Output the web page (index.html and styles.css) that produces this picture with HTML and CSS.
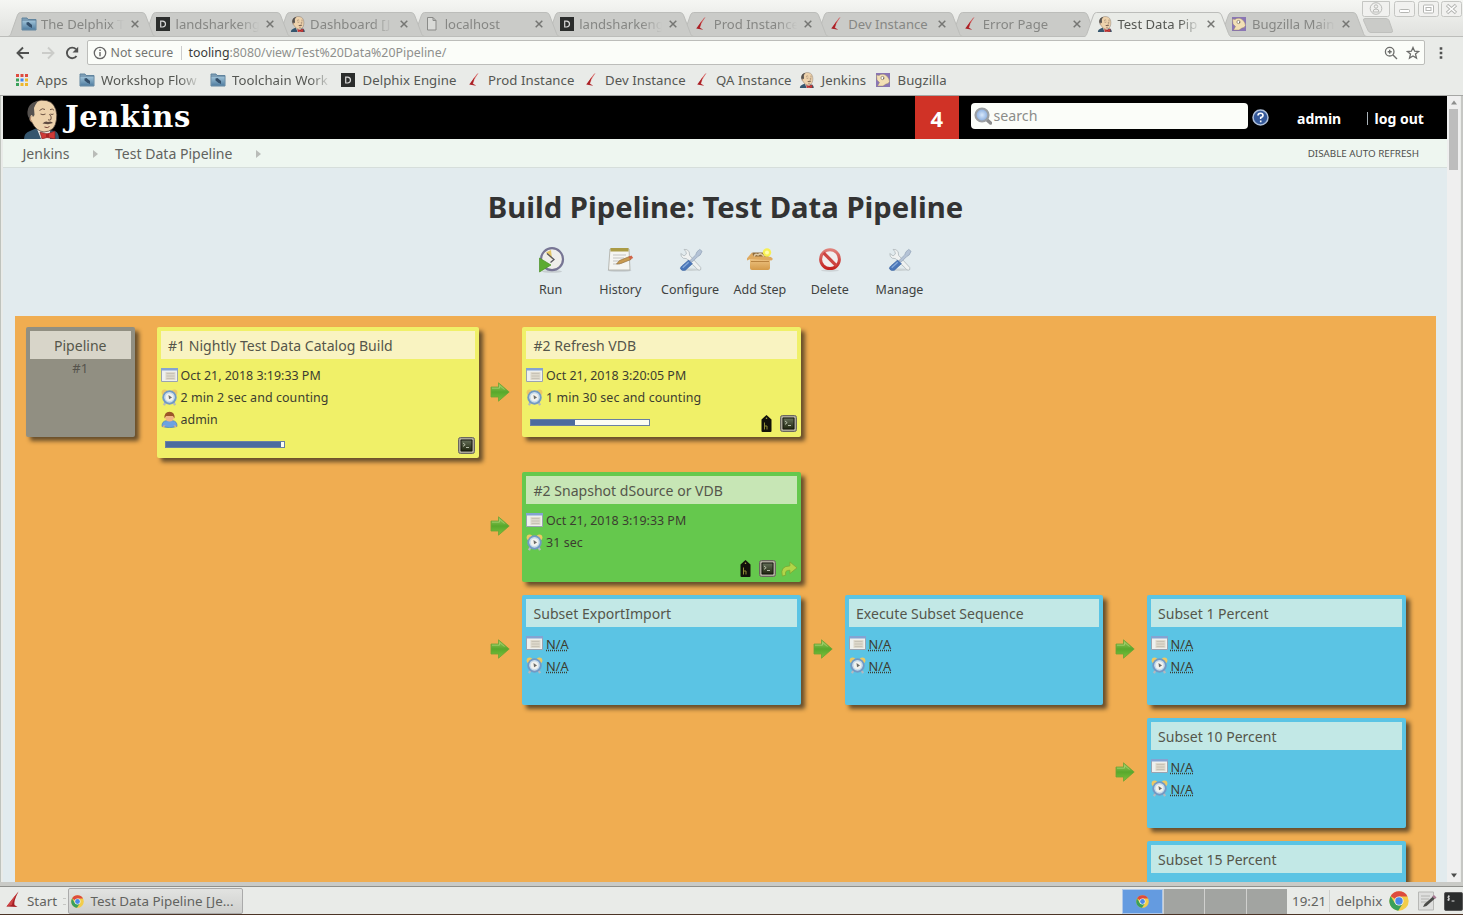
FILE: index.html
```html
<!DOCTYPE html>
<html lang="en">
<head>
<meta charset="utf-8">
<title>Test Data Pipeline [Jenkins]</title>
<link rel="stylesheet" href="styles.css">
</head>
<body>
<svg class="sprite" aria-hidden="true">
  <defs>
    <linearGradient id="g-folder" x1="0" y1="0" x2="0" y2="1"><stop offset="0" stop-color="#9cc0d6"/><stop offset="1" stop-color="#527fa2"/></linearGradient>
    <linearGradient id="g-arrow" x1="0" y1="0" x2="0" y2="1"><stop offset="0" stop-color="#9cc860"/><stop offset=".5" stop-color="#58a82c"/><stop offset="1" stop-color="#7cc23c"/></linearGradient>
    <linearGradient id="g-box" x1="0" y1="0" x2="0" y2="1"><stop offset="0" stop-color="#f0c787"/><stop offset="1" stop-color="#d49a49"/></linearGradient>
    <linearGradient id="g-red" x1="0" y1="0" x2="0" y2="1"><stop offset="0" stop-color="#df7f79"/><stop offset="1" stop-color="#c42220"/></linearGradient>
    <radialGradient id="g-lens"><stop offset="0" stop-color="#d8e8fb"/><stop offset="1" stop-color="#84a9dc"/></radialGradient>
    <linearGradient id="g-term" x1="0" y1="0" x2="0" y2="1"><stop offset="0" stop-color="#66705a"/><stop offset="1" stop-color="#20270f"/></linearGradient>
  </defs>
  <symbol id="tab-dim" viewBox="0 0 148 25"><path d="M0 24.5 C2 24 2.500 23 3 21.500 L9.500 3 Q10.500.5 12.500.5 H134 Q136.500.5 137.500 3 L144.500 21.500 C145 23 146 24.500 148 24.500 Z" fill="#cacbc8" stroke="#bcbdba"/></symbol>
  <symbol id="tab-lit" viewBox="0 0 148 25"><path d="M0 25 C2 24 2.500 23 3 21.500 L9.500 3 Q10.500.5 12.500.5 H134 Q136.500.5 137.500 3 L144.500 21.500 C145 23 146 24.500 148 25" fill="#e9ebe7" stroke="#bcbdba"/></symbol>
  <symbol id="folder" viewBox="0 0 16 16"><path d="M1 3.500V2h5l1 1.500h8V14H1z" fill="#7c9db5" stroke="#60849e"/><path d="M1.500 5h13v8.500h-13z" fill="url(#g-folder)"/><path d="M5.500 6.500l2-.5 3.500 3v3l-3-1.500-2.500-2z" fill="#334f6b"/></symbol>
  <symbol id="dbox" viewBox="0 0 16 16"><path d="M1 1h14v14H1z" fill="#2b2d2c"/><path d="M5.700 5.200h1.800q3 .2 3 2.900t-3 2.900H5.700z" fill="none" stroke="#d8d8d8" stroke-width="1.200"/></symbol>
  <symbol id="fin" viewBox="0 0 16 20"><path d="M13.500.5Q8.500 10 9.500 14l3 2-11-.5z" fill="#a51e24"/><path d="M13.500.5Q8 7 1.500 15.500L7 14q.5-5 6.500-13.500z" fill="#cf4545"/></symbol>
  <symbol id="fin-thin" viewBox="0 0 16 16"><path d="M11.800 1.500Q8 5.500 5.500 10.500L6.500 13Q7 8 11.800 1.500z" fill="#d03c3c" stroke="#d03c3c" stroke-width=".4"/><path d="M8.500 5.500L3.200 12.500l7 1.200-2.700-1.600-1 .2z" fill="#aa2026"/></symbol>
  <symbol id="butler" viewBox="0 0 36 40"><path d="M0 40q0-6 6-8l7-3 12 2 6 1q4 2 4 8z" fill="#35566e"/><path d="M13 30l13 2v8H17z" fill="#f1eee8"/><path d="M4 13Q6 3 17 1.200q12-.5 14.800 9.300 1.500 5 .7 10-.8 6-3.500 9-4 3.500-9 3.500-8-1-12-9.500-3-2-2.500-5z" fill="#edd2ac" stroke="#4a3c35" stroke-width=".7"/><path d="M3.500 15Q3 4 14 2q-3 4-4 7l.5 7-1.500 2-1-2q-2 0-1.500 4-2.500-1-3-5z" fill="#56524f"/><path d="M7 17q-2 3 1 6" fill="none" stroke="#b58b6c"/><path d="M15.500 11.500q3-3 5.500-1m5 .2q2.500-1.500 4 .5M16.500 15q2.500 1.500 5 0m5 0q1.500 1 3 0m-4 0q2.500 3 1.500 5.500-1 1-3 .3" fill="none" stroke="#5b4338" stroke-width=".9"/><path d="M18.500 24.500q3-3 5.500-1.500 3-1.500 5 1l-5 1.200z" fill="#5f4a40"/><path d="M20.500 28q3 1.500 5-.5" fill="none" stroke="#7a4439"/><path d="M16 33l7 2 8-3v8l-8-1.500-5 1.500z" fill="#cf3a37" stroke="#7a1c1c" stroke-width=".6"/><path d="M22 34.500h3v4h-3z" fill="#a82625"/></symbol>
  <symbol id="bugz" viewBox="0 0 16 16"><path d="M1 1h14v14H1z" fill="#8a76b4"/><path d="M1.500 3q3 1 4-.5 3-.8 5 .5 4 3 4 6.500-1 2.500-3.500 2.500L8 14H2.500l2-3.500L2 8z" fill="#f2dfb5" stroke="#8c7b63" stroke-width=".4"/><circle cx="7.500" cy="6" r="1.600" fill="#fff" stroke="#695e52" stroke-width=".6"/><path d="M8 6.200h.8" stroke="#333"/></symbol>
  <symbol id="page" viewBox="0 0 16 16"><path d="M3.500 1.500h5.500l3 3v9.500H3.500zM9 1.500v3h3" fill="#d9dad7" stroke="#8a8b88"/></symbol>
  <symbol id="x" viewBox="0 0 10 10"><path d="M1.700 1.700l6.600 6.600m0-6.600L1.700 8.300" stroke="#757673" stroke-width="1.500"/></symbol>
  <symbol id="cal" viewBox="0 0 17 17"><path d="M.5 1.500h16v13H.5z" fill="#eef0ee" stroke="#9aa3b0"/><path d="M0 1h17v2.500H0z" fill="#84a3d2"/><path d="M4.500 5h10v8h-10z" fill="#ded9cc"/><path d="M5.500 6.500h8M5.500 9h8M5.500 11.500h8" stroke="#c2bcb0" stroke-width=".8"/></symbol>
  <symbol id="clock" viewBox="0 0 17 17"><path d="M4.500 13L3 16.300m9.500-3.300l1.500 3.300" stroke="#b4b9bf" stroke-width="2.200"/><circle cx="3.600" cy="3.600" r="3" fill="#edc963"/><circle cx="13.400" cy="3.600" r="3" fill="#edc963"/><circle cx="8.500" cy="8.500" r="7.200" fill="#7299c4"/><circle cx="8.500" cy="8.300" r="4.600" fill="#f2f2ee" stroke="#c8dceb" stroke-width="1.500"/><path d="M7.500 6l3.500 2.500-3 1.700z" fill="#6b6b68"/></symbol>
  <symbol id="user" viewBox="0 0 17 17"><path d="M1 15.500q-.5-5.500 5-6h5q5.500.5 5 6-7.500 2.500-15 0z" fill="#6ba2e2" stroke="#477aac" stroke-width=".6"/><path d="M1 15l2 1.300 1.500-2zM16 15l-2 1.300-1.500-2z" fill="#f0b080"/><circle cx="8.500" cy="6" r="4.500" fill="#f0b584"/><path d="M3.500 7.500Q3 1 8.500.8 14 1 13.500 7.500L12 5H5z" fill="#9c5529"/></symbol>
  <symbol id="term" viewBox="0 0 17 17"><rect x=".5" y=".5" width="16" height="16" rx="2" fill="#aaa698" stroke="#6a675e"/><path d="M3 3h11v11H3z" fill="url(#g-term)" stroke="#17190f"/><path d="M5 6l2.200 1.700L5 9.400M8 10.500h3" fill="none" stroke="#c4c9b6" stroke-width=".9"/></symbol>
  <symbol id="tag" viewBox="0 0 11 17"><path d="M5.500 0L10.500 4.500V16q0 1-1 1h-8q-1 0-1-1V4.500z" fill="#12110a"/><circle cx="5.500" cy="3.200" r=".8" fill="#aaa842"/><path d="M3.500 7.500v7M3.500 11H6v3.500" fill="none" stroke="#8f8c35"/></symbol>
  <symbol id="redo" viewBox="0 0 17 17"><path d="M1.500 16Q-1.500 5.500 9.500 5.200V1L17 7.300l-7.500 6V9.800Q3.500 9.500 5 15z" fill="#b2d548" stroke="#7da532" stroke-width=".8"/></symbol>
  <symbol id="arrow" viewBox="0 0 20 20"><path d="M1 5h7.500V.8L19.200 10 8.500 19.200V15H1z" fill="url(#g-arrow)" stroke="#6da335" stroke-width=".8"/><path d="M2 6.200h7.500V3.500l5 4" fill="none" stroke="#a5cf70" stroke-width=".8"/></symbol>
  <symbol id="tools" viewBox="0 0 26 26"><ellipse cx="13" cy="23.500" rx="11" ry="1.300" fill="#cbd2d4"/><path d="M5.500 1.500Q9 1 11 4l.5 4L23.500 21q1 3-1.500 3-2 0-3-2L8 11.500q-4 .5-5.500-2.500l-.5-3 3.500 2.500L8 6.500 7.500 4z" fill="#f0f2f1" stroke="#a9b2b6" stroke-width=".8"/><path d="M22.500 1.500l2.500 2-2 4-3 2-6 6-2-2 6-6 1.500-3.500z" fill="#b4c3d6" stroke="#8c9db3" stroke-width=".7"/><path d="M10.500 13l4 4-7.500 7q-3.500 1.500-5.500-1.500 0-2 1.500-3z" fill="#4a76b8" stroke="#3a639f" stroke-width=".6"/><path d="M10.500 15.500l-6.500 6" stroke="#86aada" stroke-width="1.500"/></symbol>
  <symbol id="run" viewBox="0 0 28 28"><ellipse cx="15" cy="25.500" rx="10" ry="1.300" fill="#c6cdd0"/><circle cx="15" cy="13.200" r="11" fill="#eeeeea" stroke="#777594" stroke-width="2.200"/><path d="M15 13L9 6.500l5-2.500z" fill="#e4c766"/><path d="M10 7.500l7 6-3.500 3" fill="none" stroke="#57565c" stroke-width="1.300"/><path d="M2.500 12l11.500 7-11.500 7z" fill="#5cab30" stroke="#4b9126" stroke-width=".7"/></symbol>
  <symbol id="history" viewBox="0 0 28 28"><ellipse cx="13.500" cy="24.500" rx="12" ry="1.300" fill="#c6cdd0"/><path d="M4 3h19l1 21H2.500z" fill="#f5f5f2" stroke="#aaa9a2" stroke-width=".8"/><path d="M4.500 2h18v3.500h-18z" fill="#aa9b45"/><path d="M7 9h13M7 12h11M7 15h6M7 18h7" stroke="#c3c3c1"/><path d="M10.500 18l3-3.500 10-4 1.500 3-10 4z" fill="#c99a50" stroke="#8b6730" stroke-width=".6"/><path d="M22.500 10.800l3-1.300 1.700 2.500-3 1.500z" fill="#cf6448"/></symbol>
  <symbol id="add" viewBox="0 0 28 28"><path d="M4 12h20v10q0 2-2 2H6q-2 0-2-2z" fill="url(#g-box)"/><path d="M6.500 6.500h14.500l2 6H5z" fill="#8e6b3b"/><path d="M8 11q1-4 4-2 3-3 6 2" fill="none" stroke="#dfcaa6" stroke-width="1.500"/><path d="M4.500 13L1 14.500v-2.300L6 6.500l1.500 4h13.500l4 .5 2 2-1.500 1.500z" fill="#dfaa60"/><path d="M5 15.500h18" stroke="#b98440"/><circle cx="21" cy="6.500" r="4.200" fill="#f7f053"/><circle cx="21" cy="6.500" r="2" fill="#fffcae"/></symbol>
  <symbol id="delete" viewBox="0 0 28 28"><ellipse cx="14" cy="24.500" rx="9" ry="1.200" fill="#cdd3d6"/><circle cx="14" cy="13.200" r="9.400" fill="#f1eeee" stroke="url(#g-red)" stroke-width="3"/><path d="M7.500 6.800l13 13" stroke="#cd4441" stroke-width="3.200"/></symbol>
  <symbol id="chrome" viewBox="0 0 20 20"><circle cx="10" cy="10" r="9.700" fill="#f2cd4a"/><path d="M10 10L1.600 5.200A9.700 9.700 0 0 1 18.500 5.400H10z" fill="#dd4b3e"/><path d="M1.600 5.200A9.700 9.700 0 0 0 9.200 19.700L14 12.300 10 14.500 6 12.300z" fill="#3aa05b"/><circle cx="10" cy="10" r="4.600" fill="#f4f4f0"/><circle cx="10" cy="10" r="3.700" fill="#4a88e8"/></symbol>
</svg>

<div class="screen">
  <header class="tabstrip">
    <div class="tabs">
      <div class="tab z10"><svg class="shape"><use href="#tab-dim"/></svg><svg class="fav"><use href="#folder"/></svg><span class="name early">The Delphix T</span><svg class="close"><use href="#x"/></svg></div>
      <div class="tab z9"><svg class="shape"><use href="#tab-dim"/></svg><svg class="fav"><use href="#dbox"/></svg><span class="name">landsharkeng</span><svg class="close"><use href="#x"/></svg></div>
      <div class="tab z8"><svg class="shape"><use href="#tab-dim"/></svg><svg class="fav"><use href="#butler"/></svg><span class="name">Dashboard [J</span><svg class="close"><use href="#x"/></svg></div>
      <div class="tab z7"><svg class="shape"><use href="#tab-dim"/></svg><svg class="fav"><use href="#page"/></svg><span class="name">localhost</span><svg class="close"><use href="#x"/></svg></div>
      <div class="tab z6"><svg class="shape"><use href="#tab-dim"/></svg><svg class="fav"><use href="#dbox"/></svg><span class="name">landsharkeng</span><svg class="close"><use href="#x"/></svg></div>
      <div class="tab z5"><svg class="shape"><use href="#tab-dim"/></svg><svg class="fav"><use href="#fin-thin"/></svg><span class="name">Prod Instance</span><svg class="close"><use href="#x"/></svg></div>
      <div class="tab z4"><svg class="shape"><use href="#tab-dim"/></svg><svg class="fav"><use href="#fin-thin"/></svg><span class="name full">Dev Instance</span><svg class="close"><use href="#x"/></svg></div>
      <div class="tab z3"><svg class="shape"><use href="#tab-dim"/></svg><svg class="fav"><use href="#fin-thin"/></svg><span class="name">Error Page</span><svg class="close"><use href="#x"/></svg></div>
      <div class="tab active"><svg class="shape"><use href="#tab-lit"/></svg><svg class="fav"><use href="#butler"/></svg><span class="name">Test Data Pip</span><svg class="close"><use href="#x"/></svg></div>
      <div class="tab z1"><svg class="shape"><use href="#tab-dim"/></svg><svg class="fav"><use href="#bugz"/></svg><span class="name">Bugzilla Main</span><svg class="close"><use href="#x"/></svg></div>
      <svg class="newtab" viewBox="0 0 32 16"><path d="M3 .5h21q2 0 3 2l3.500 10q.5 2-1.500 2H9q-2 0-3-2L1.500 2.500Q1 .5 3 .5z" fill="#cacbc8" stroke="#bfc0bd"/></svg>
    </div>
    <div class="winbtns">
      <svg class="wb wide" viewBox="0 0 28 16"><path d="M.5 .5v13q0 2 2 2h23q2 0 2-2V.5z" fill="#f1f1ef" stroke="#c5c6c3"/><circle cx="14" cy="7.500" r="5.800" fill="none" stroke="#babbb8"/><circle cx="14" cy="5.500" r="1.700" fill="none" stroke="#babbb8"/><path d="M11 11q0-3 3-3t3 3z" fill="none" stroke="#babbb8"/></svg>
      <svg class="wb" viewBox="0 0 21 16"><rect x=".5" y=".5" width="20" height="15" rx="2" fill="#f1f1ef" stroke="#c5c6c3"/><rect x="5.500" y="8.500" width="10" height="3" rx="1" fill="#fff" stroke="#b5b6b3"/></svg>
      <svg class="wb" viewBox="0 0 21 16"><rect x=".5" y=".5" width="20" height="15" rx="2" fill="#f1f1ef" stroke="#c5c6c3"/><rect x="5.500" y="4" width="10" height="8" rx="1" fill="#fff" stroke="#b5b6b3"/><rect x="8" y="6.500" width="5" height="3" fill="none" stroke="#b5b6b3"/></svg>
      <svg class="wb" viewBox="0 0 21 16"><rect x=".5" y=".5" width="20" height="15" rx="2" fill="#f1f1ef" stroke="#c5c6c3"/><path d="M6 4l9 8m0-8l-9 8" stroke="#b5b6b3" stroke-width="3.400"/><path d="M6.500 4.500l8 7m0-7l-8 7" stroke="#fff" stroke-width="1.500"/></svg>
    </div>
  </header>

  <div class="toolbar">
    <svg class="nav" viewBox="0 0 14 14"><path d="M13 7H2M7 1.500L1.500 7 7 12.500" fill="none" stroke="#505150" stroke-width="1.900"/></svg>
    <svg class="nav" viewBox="0 0 14 14"><path d="M1 7h11M7 1.500L12.500 7 7 12.500" fill="none" stroke="#cbccc9" stroke-width="1.900"/></svg>
    <svg class="nav" viewBox="0 0 14 14"><path d="M11.500 10A5.300 5.300 0 1 1 11 3.200" fill="none" stroke="#505150" stroke-width="1.900"/><path d="M13.200.8v5.700H7.500z" fill="#505150"/></svg>
    <div class="omnibox">
      <svg class="info" viewBox="0 0 14 14"><circle cx="7" cy="7" r="5.700" fill="none" stroke="#666" stroke-width="1.300"/><path d="M7 6v4.200M7 3.500V5" stroke="#666" stroke-width="1.400"/></svg>
      <span class="secure">Not secure</span><i class="bar"></i>
      <span class="url"><b>tooling</b>:8080/view/Test%20Data%20Pipeline/</span>
      <svg class="oi" viewBox="0 0 14 14"><circle cx="5.700" cy="5.700" r="4.300" fill="none" stroke="#6c6d6b" stroke-width="1.300"/><path d="M9 9l4 4M3.700 5.700h4M5.700 3.700v4" stroke="#6c6d6b" stroke-width="1.400"/></svg>
      <svg class="oi" viewBox="0 0 14 14"><path d="M7 1.500l1.600 3.700 4 .3-3.100 2.600 1 4L7 10l-3.500 2.100 1-4L1.400 5.500l4-.3z" fill="none" stroke="#6c6d6b" stroke-width="1.300"/></svg>
    </div>
    <svg class="dots" viewBox="0 0 4 14"><path d="M.7 1.200h2.600v2.600H.7zM.7 5.700h2.600v2.600H.7zM.7 10.200h2.600v2.600H.7z" fill="#505150"/></svg>
  </div>

  <nav class="bookmarks">
    <div class="bm b-apps"><svg viewBox="0 0 16 16"><path d="M2 2h3v3H2zM6.500 2h3v3h-3zM11 2h3v3h-3z" fill="#df4b3f"/><path d="M2 6.500h3v3H2z" fill="#3aa15b"/><path d="M6.500 6.500h3v3h-3z" fill="#4385ee"/><path d="M11 6.500h3v3h-3zM6.500 11h3v3h-3zM11 11h3v3h-3z" fill="#eeb72c"/><path d="M2 11h3v3H2z" fill="#3aa15b"/></svg><span>Apps</span></div>
    <div class="bm b-work"><svg><use href="#folder"/></svg><span class="fade">Workshop Flow</span></div>
    <div class="bm b-tool"><svg><use href="#folder"/></svg><span class="fade">Toolchain Work</span></div>
    <div class="bm b-eng"><svg><use href="#dbox"/></svg><span>Delphix Engine</span></div>
    <div class="bm b-prod"><svg><use href="#fin-thin"/></svg><span>Prod Instance</span></div>
    <div class="bm b-dev"><svg><use href="#fin-thin"/></svg><span>Dev Instance</span></div>
    <div class="bm b-qa"><svg><use href="#fin-thin"/></svg><span>QA Instance</span></div>
    <div class="bm b-jen"><svg><use href="#butler"/></svg><span>Jenkins</span></div>
    <div class="bm b-bug"><svg><use href="#bugz"/></svg><span>Bugzilla</span></div>
  </nav>

  <div class="viewport">
    <main class="page">
      <div class="masthead">
        <svg class="logo"><use href="#butler"/></svg>
        <span class="brand">Jenkins</span>
        <span class="alert">4</span>
        <div class="search"><svg viewBox="0 0 18 18"><path d="M12 12l4.500 4" stroke="#8c8d8d" stroke-width="3.500" stroke-linecap="round"/><circle cx="8" cy="8" r="6.500" fill="url(#g-lens)" stroke="#9b9fa3" stroke-width="2.200"/></svg><span>search</span></div>
        <svg class="help" viewBox="0 0 17 17"><circle cx="8.500" cy="8.500" r="7.500" fill="#35599a" stroke="#aebfd9" stroke-width="1.500"/><path d="M6 6.500q0-2.300 2.500-2.300T11 6.300Q11 8 8.700 8.500V10M8.700 11.500v1.700" fill="none" stroke="#fff" stroke-width="1.600"/></svg>
        <span class="who">admin</span><i class="pipe"></i><span class="out">log out</span>
      </div>
      <div class="crumbs">
        <span class="c1">Jenkins</span><svg class="tri" viewBox="0 0 5 8"><path d="M0 0l5 4-5 4z" fill="#b9bcb8"/></svg><span class="c2">Test Data Pipeline</span><svg class="tri" viewBox="0 0 5 8"><path d="M0 0l5 4-5 4z" fill="#b9bcb8"/></svg>
        <span class="refresh">DISABLE AUTO REFRESH</span>
      </div>
      <h1><span>Build Pipeline: Test Data Pipeline</span></h1>
      <div class="actions">
        <div><svg><use href="#run"/></svg><span>Run</span></div>
        <div><svg><use href="#history"/></svg><span>History</span></div>
        <div><svg class="tl"><use href="#tools"/></svg><span>Configure</span></div>
        <div><svg><use href="#add"/></svg><span>Add Step</span></div>
        <div><svg><use href="#delete"/></svg><span>Delete</span></div>
        <div><svg class="tl"><use href="#tools"/></svg><span>Manage</span></div>
      </div>

      <section class="board">
        <div class="card gray"><div class="head">Pipeline</div><div class="rev">#1</div></div>
        <div class="card yellow first">
          <div class="head">#1 Nightly Test Data Catalog Build</div>
          <div class="info-row"><svg><use href="#cal"/></svg><span>Oct 21, 2018 3:19:33 PM</span></div>
          <div class="info-row"><svg><use href="#clock"/></svg><span class="dur">2 min 2 sec and counting</span></div>
          <div class="info-row"><svg><use href="#user"/></svg><span>admin</span></div>
          <div class="foot"><div class="meter"><div style="width:98%"></div></div><svg class="term"><use href="#term"/></svg></div>
        </div>
        <div class="col">
          <div class="branch tall"><svg class="arrow"><use href="#arrow"/></svg>
            <div class="card yellow mid">
              <div class="head">#2 Refresh VDB</div>
              <div class="info-row"><svg><use href="#cal"/></svg><span>Oct 21, 2018 3:20:05 PM</span></div>
              <div class="info-row"><svg><use href="#clock"/></svg><span class="dur">1 min 30 sec and counting</span></div>
              <div class="foot"><div class="meter"><div style="width:37%"></div></div><svg class="tag"><use href="#tag"/></svg><svg class="term"><use href="#term"/></svg></div>
            </div>
          </div>
          <div class="branch"><svg class="arrow"><use href="#arrow"/></svg>
            <div class="card green mid">
              <div class="head">#2 Snapshot dSource or VDB</div>
              <div class="info-row"><svg><use href="#cal"/></svg><span>Oct 21, 2018 3:19:33 PM</span></div>
              <div class="info-row"><svg><use href="#clock"/></svg><span class="dur">31 sec</span></div>
              <div class="foot"><svg class="tag"><use href="#tag"/></svg><svg class="term"><use href="#term"/></svg><svg class="redo"><use href="#redo"/></svg></div>
            </div>
          </div>
          <div class="branch"><svg class="arrow"><use href="#arrow"/></svg>
            <div class="card blue mid">
              <div class="head">Subset ExportImport</div>
              <div class="info-row"><svg><use href="#cal"/></svg><span class="na">N/A</span></div>
              <div class="info-row"><svg><use href="#clock"/></svg><span class="na">N/A</span></div>
            </div>
            <svg class="arrow"><use href="#arrow"/></svg>
            <div class="card blue exec">
              <div class="head">Execute Subset Sequence</div>
              <div class="info-row"><svg><use href="#cal"/></svg><span class="na">N/A</span></div>
              <div class="info-row"><svg><use href="#clock"/></svg><span class="na">N/A</span></div>
            </div>
            <div class="col">
              <div class="branch"><svg class="arrow"><use href="#arrow"/></svg>
                <div class="card blue leaf">
                  <div class="head">Subset 1 Percent</div>
                  <div class="info-row"><svg><use href="#cal"/></svg><span class="na">N/A</span></div>
                  <div class="info-row"><svg><use href="#clock"/></svg><span class="na">N/A</span></div>
                </div>
              </div>
              <div class="branch"><svg class="arrow"><use href="#arrow"/></svg>
                <div class="card blue leaf">
                  <div class="head">Subset 10 Percent</div>
                  <div class="info-row"><svg><use href="#cal"/></svg><span class="na">N/A</span></div>
                  <div class="info-row"><svg><use href="#clock"/></svg><span class="na">N/A</span></div>
                </div>
              </div>
              <div class="branch last">
                <div class="card blue leaf"><div class="head">Subset 15 Percent</div></div>
              </div>
            </div>
          </div>
        </div>
      </section>
    </main>
    <aside class="scrollbar">
      <svg viewBox="0 0 8 5"><path d="M1 4.500L4 .5l3 4z" fill="#8e8f8e"/></svg>
      <div class="thumb"></div>
      <svg class="down" viewBox="0 0 8 5"><path d="M1 .5l3 4 3-4z" fill="#4b4c4b"/></svg>
    </aside>
  </div>

  <footer class="taskbar">
    <svg class="startfin"><use href="#fin"/></svg><span class="start">Start</span><i class="grip"></i>
    <div class="task"><svg><use href="#chrome"/></svg><span>Test Data Pipeline [Je...</span></div>
    <div class="pager"><div class="on"><svg><use href="#chrome"/></svg></div><div></div><div></div><div></div></div>
    <span class="time">19:21</span><i class="div"></i><span class="host">delphix</span>
    <svg class="tc"><use href="#chrome"/></svg>
    <svg class="te" viewBox="0 0 20 20"><path d="M1.500 1h15v18h-15z" fill="#dedfdd" stroke="#b7b8b5"/><path d="M4 5h9M4 8h8M4 11h6" stroke="#b2b3b0"/><path d="M6 16l1.500-3L16 5.500l2 2L9.500 15z" fill="#4a4b48"/><path d="M15 5.500L17 4l2.500 2.500-1.500 1.500z" fill="#a77a93"/></svg>
    <svg class="tt" viewBox="0 0 20 20"><rect x=".5" y=".5" width="19" height="19" rx="1.500" fill="#2b2d2d" stroke="#555"/><path d="M6 4.500H4.500q-1 1.200.3 1.800 1.500.8.200 2H3.500M5 3.500v6M8 9.500h3" fill="none" stroke="#e5e5e5"/></svg>
  </footer>
</div>
</body>
</html>
```

FILE: styles.css
```css
* { box-sizing: border-box; }
body { margin: 0; font-family: "Noto Sans", sans-serif; background: #e9ebe8; overflow: hidden; }
svg { display: block; flex: none; }
span { white-space: nowrap; }
.sprite { position: absolute; width: 0; height: 0; }
.screen { width: 1463px; height: 915px; display: flex; flex-direction: column; overflow: hidden; }

/* tab strip */
.tabstrip { height: 37px; flex: none; display: flex; justify-content: space-between; background: linear-gradient(#f5f6f3, #e2e3e0 90%); border-bottom: 1px solid #bcbdba; position: relative; }
.tabs { display: flex; padding: 12px 0 0 8px; }
.tab { position: relative; width: 134.550px; height: 25px; display: flex; align-items: center; padding: 0 0 1px 12.500px; }
.tab .shape { position: absolute; left: 0; top: 0; width: 148px; height: 25px; z-index: -1; }
.fav { width: 16px; height: 16px; }
.name { font-size: 13.100px; color: #868784; width: 84px; margin-left: 4.500px; -webkit-mask-image: linear-gradient(90deg, #000 74%, transparent 99%); mask-image: linear-gradient(90deg, #000 74%, transparent 99%); }
.early { -webkit-mask-image: linear-gradient(90deg, #000 82%, rgba(0,0,0,.2) 92%, transparent); mask-image: linear-gradient(90deg, #000 82%, rgba(0,0,0,.2) 92%, transparent); }
.full { -webkit-mask-image: none; mask-image: none; }
.active .name { color: #555753; }
.close { width: 10px; height: 10px; margin-left: 5px; }
.z10 { z-index: 10; } .z9 { z-index: 9; } .z8 { z-index: 8; } .z7 { z-index: 7; } .z6 { z-index: 6; }
.z5 { z-index: 5; } .z4 { z-index: 4; } .z3 { z-index: 3; } .z1 { z-index: 1; }
.active { z-index: 11; }
.newtab { width: 32px; height: 16px; margin: 5.500px 0 0 9px; }
.winbtns { position: absolute; right: 0; top: 1px; display: flex; gap: 2.500px; padding-right: 1px; }
.wb { width: 21px; height: 16px; }
.wb.wide { width: 28px; margin-right: 1.500px; }

/* toolbar */
.toolbar { height: 31px; flex: none; display: flex; align-items: center; padding-left: 16px; background: #e9ebe8; }
.nav { width: 14px; height: 14px; margin-right: 10.500px; }
.omnibox { width: 1338px; height: 25px; display: flex; align-items: center; background: #fbfdf9; border: 1px solid #bcbdba; border-radius: 2px; font-size: 12.350px; padding: 0 4px 0 5px; margin-left: -3px; }
.info { width: 14px; height: 14px; }
.secure { margin-left: 4px; width: 63.500px; color: #747572; }
.bar { width: 1px; height: 14px; background: #ccc; margin: 0 7px 0 6.500px; }
.url { color: #8f908d; flex: 1; }
.url b { font-weight: 400; color: #3a3b39; }
.oi { width: 14px; height: 14px; margin-left: 8px; }
.dots { width: 4px; height: 14px; margin-left: 14px; }

/* bookmarks */
.bookmarks { height: 28px; flex: none; display: flex; align-items: center; padding: 0 0 4px 14px; background: #e9ebe8; font-size: 13.200px; color: #555753; border-bottom: 1px solid #a5a6a4; }
.bm { display: flex; gap: 6.500px; flex: none; letter-spacing: .06px; }
.bm svg { width: 16px; height: 16px; margin-top: 1px; }
.b-apps { width: 64.500px; } .b-work { width: 131px; } .b-tool { width: 130.500px; } .b-eng { width: 125.500px; }
.b-prod { width: 117px; } .b-dev { width: 111px; } .b-qa { width: 105.500px; } .b-jen { width: 76px; }
.fade { width: 100px; -webkit-mask-image: linear-gradient(90deg, #000 78%, transparent); mask-image: linear-gradient(90deg, #000 78%, transparent); }

/* page */
.viewport { height: 786px; flex: none; display: flex; border-left: 1px solid #bfc3bd; padding-left: 2px; border-right: 2px solid #c6c7c4; overflow: hidden; }
.page { width: 1444px; height: 786px; overflow: hidden; background: #e2ebee; flex: none; }
.masthead { height: 43px; background: #000; display: flex; align-items: center; color: #fff; }
.logo { width: 36px; height: 40px; margin: 3px 0 0 20.500px; }
.brand { font: bold 29px "DejaVu Serif", serif; letter-spacing: .6px; width: 850px; margin: -2px 0 0 5.500px; }
.alert { width: 43.500px; height: 43px; background: #d03226; display: grid; place-items: center; font-size: 22px; font-weight: 700; padding-top: 1px; }
.search { width: 277px; height: 26px; margin: -3px 0 0 12px; border-radius: 4px; background: #fbfdf9; color: #8b8c89; display: flex; align-items: center; padding: 0 0 1px 3px; font-size: 14.200px; }
.search svg { width: 18px; height: 18px; margin-right: 2px; }
.help { width: 17px; height: 17px; margin: 0 0 0 4.500px; }
.who, .out { font-size: 14px; font-weight: 700; margin-top: 1px; }
.who { margin-left: 28px; width: 45px; }
.pipe { width: 1px; height: 13px; background: #a9b2b8; margin: 2px 7px 0 24.500px; }
.crumbs { height: 29px; background: #eef6f0; border-bottom: 1px solid #d6dedb; display: flex; align-items: center; font-size: 14.050px; color: #62635f; padding-left: 19.500px; }
.c1 { width: 70.500px; } .c2 { width: 141px; margin-left: 17px; }
.tri { width: 5px; height: 8px; margin-top: 1px; }
.refresh { margin: 0 28px 0 auto; font-size: 9.800px; color: #4d4f4b; }
h1 { margin: 0; height: 79px; display: grid; place-items: center; font-size: 29.250px; font-weight: 700; color: #333; padding: 0 0 2px 1px; }
.actions { display: flex; justify-content: center; height: 69px; }
.actions div { width: 69.800px; display: flex; flex-direction: column; align-items: center; font-size: 12.500px; color: #40423f; }
.actions span { margin-top: 7px; line-height: 18px; }
.actions svg { width: 28px; height: 28px; margin-top: -1px; }
.actions svg.tl { width: 24px; height: 24px; margin: 1px 0 2px 1px; }

/* pipeline board */
.board { width: 1421px; height: 567px; margin-left: 12px; background: #f0ad51; padding: 11px 0 0 11px; display: flex; align-items: flex-start; }
.card { flex: none; height: 109.500px; border-radius: 2px; padding: 4px; display: flex; flex-direction: column; box-shadow: 4px 4px 4px rgba(20,20,20,.62); color: #3c3d30; font-size: 12.450px; }
.head { height: 28px; margin-bottom: 6px; padding-left: 7.500px; display: flex; align-items: center; font-size: 14.050px; color: #55564b; white-space: nowrap; flex: none; }
.info-row { height: 21.750px; display: flex; align-items: center; gap: 3px; flex: none; }
.info-row svg { width: 17px; height: 17px; }
.dur { letter-spacing: .08px; }
.na { text-decoration: underline dotted; text-underline-offset: 1px; font-size: 12.800px; }
.foot { margin-top: auto; height: 18px; display: flex; align-items: center; justify-content: flex-end; padding-left: 4px; }
.meter { width: 120px; height: 7px; border: 1px solid #6a80a4; background: #fcfcf4; margin-right: auto; margin-top: -2px; }
.meter div { height: 100%; background: #4c6b9e; }
.term { width: 17px; height: 17px; }
.tag { width: 11px; height: 17px; margin-right: 8.500px; }
.redo { width: 16px; height: 16px; margin-left: 5px; }
.gray { width: 108.500px; background: #918f82; margin-right: 22px; }
.gray .head { background: #d8d5c9; justify-content: center; padding: 0; margin: 0; }
.rev { text-align: center; font-size: 13px; color: #55534c; }
.yellow { background: #f0f068; } .yellow .head { background: #f9f3c1; }
.green { background: #65c84d; } .green .head { background: #c7e6b5; }
.blue { background: #5bc4e4; } .blue .head { background: #c2e8e6; }
.first { width: 322px; height: 131px; }
.mid { width: 279px; } .exec { width: 258.500px; } .leaf { width: 259px; }
.branch { display: flex; align-items: flex-start; height: 123px; }
.last { padding-left: 43.500px; }
.tall { height: 145px; }
.arrow { width: 20px; height: 20px; margin: 44px 12px 0 11.500px; }
.tall > .arrow { margin-top: 55px; }

/* scrollbar */
.scrollbar { width: 13px; background: #efefef; display: flex; flex-direction: column; align-items: center; padding: 4px 0 4px; }
.scrollbar svg { width: 8px; height: 5px; }
.thumb { width: 9px; height: 61px; background: #bdbdbd; margin-top: 4px; }
.scrollbar .down { margin-top: auto; }

/* taskbar */
.taskbar { height: 33px; flex: none; border-top: 4px solid #c9cac6; display: flex; align-items: center; padding: 2px 0 1px 5px; background: #e9ebe8; color: #62635f; font-size: 13.400px; box-shadow: inset 0 1px #8f908c, inset 0 -1px #4c3426; }
.startfin { width: 16px; height: 20px; }
.start { margin-left: 6px; width: 34px; }
.grip { width: 3px; height: 7px; margin: 0 2px; border-top: 1px solid #c5c6c3; border-bottom: 1px solid #c5c6c3; }
.task { width: 175px; height: 26px; border: 1px solid #aaa; border-radius: 2px; background: linear-gradient(#e2e3e1, #cfd0ce); display: flex; align-items: center; gap: 6.500px; padding-left: 2px; }
.task svg { width: 13px; height: 13px; }
.pager { display: flex; margin-left: auto; gap: 1px; background: #d0d0ce; }
.pager div { width: 40.500px; height: 25px; background: #a2a4a1; display: grid; place-items: center; }
.pager .on { background: #649be0; border: 1px solid #b0c8e8; }
.pager svg { width: 13px; height: 13px; }
.time { margin-left: 5px; width: 31px; }
.div { width: 1px; height: 22px; background: #cfd0cd; margin: 0 6px; }
.host { width: 47px; }
.tc { width: 20px; height: 20px; margin-left: 6px; }
.te { width: 20px; height: 20px; margin-left: 8px; }
.tt { width: 19px; height: 19px; margin-left: 7px; }
```
